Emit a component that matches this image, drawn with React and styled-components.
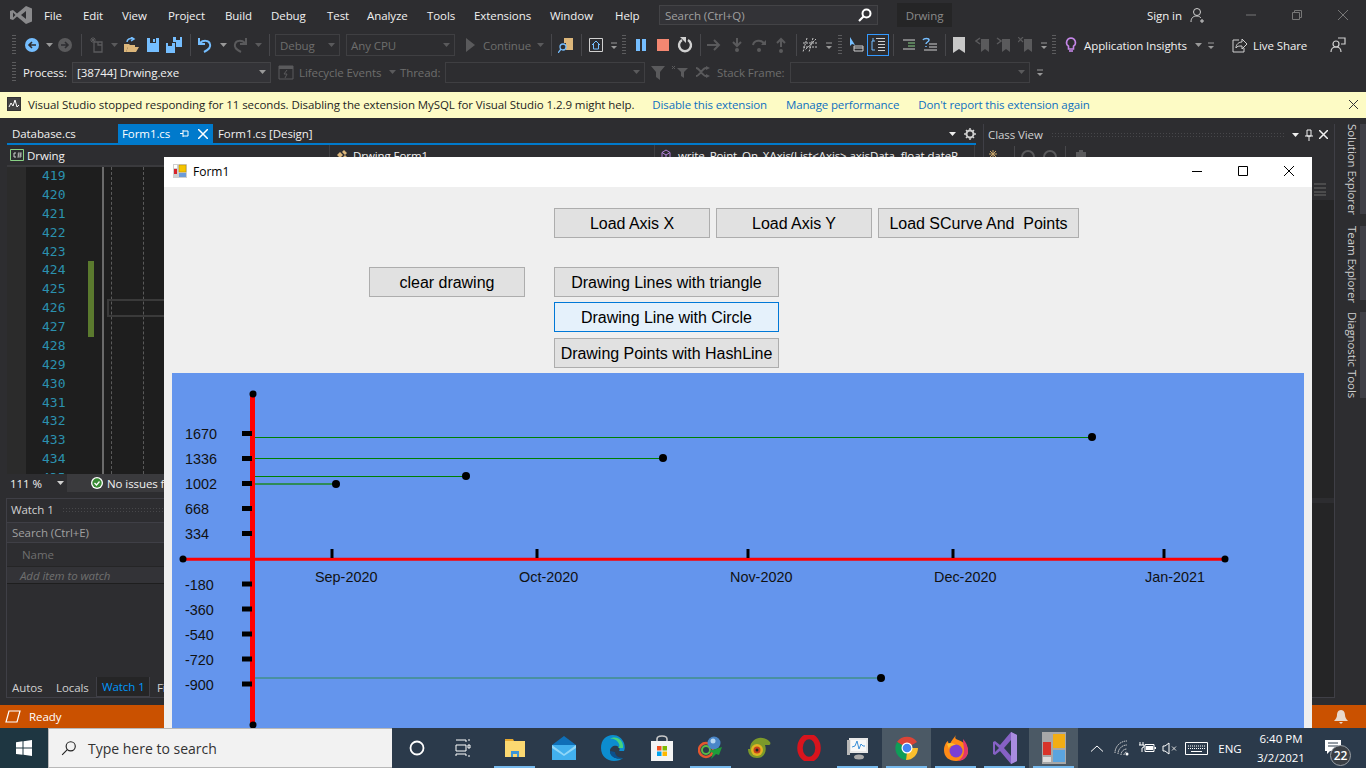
import React from 'react'
import styled, { createGlobalStyle } from 'styled-components'

const GlobalStyle = createGlobalStyle`
  html, body { margin: 0; padding: 0; background: #2d2d30; }
  * { box-sizing: border-box; }
`

const Desktop = styled.div`
  position: relative;
  width: 1366px;
  height: 768px;
  overflow: hidden;
  display: flex;
  flex-direction: column;
  background: #2d2d30;
  color: #f1f1f1;
  font-family: "Open Sans", "Liberation Sans", sans-serif;
  font-size: 11.5px;
  letter-spacing: -0.08px;
`

/* ---------- title bar ---------- */
const TitleBar = styled.div`
  height: 30px;
  display: flex;
  align-items: center;
  padding-left: 10px;
  flex: none;
`
const Logo = styled.div`
  width: 34px;
  display: flex;
  flex: none;
`
const MenuItem = styled.span`
  width: ${p => p.$w}px;
  flex: none;
`
const SearchBox = styled.div`
  width: 219px;
  height: 20px;
  display: flex;
  align-items: center;
  justify-content: space-between;
  padding: 0 5px;
  background: #333337;
  border: 1px solid #434346;
  color: #a0a0a0;
  flex: none;
`
const SolutionName = styled.div`
  width: 55px;
  height: 24px;
  margin-left: 19px;
  display: flex;
  align-items: center;
  justify-content: center;
  background: #252526;
  color: #8a8a8a;
  flex: none;
`
const SignIn = styled.span`
  margin-left: 195px;
  width: 43px;
  flex: none;
`
const WinControls = styled.div`
  margin-left: 22px;
  display: flex;
  width: 138px;
  flex: none;
`
const WinControl = styled.span`
  width: 46px;
  display: flex;
  justify-content: center;
  color: #777;
`

/* ---------- toolbars ---------- */
const ToolRow = styled.div`
  height: ${p => p.$h}px;
  display: flex;
  align-items: center;
  padding-left: 10px;
  flex: none;
`
const Slot = styled.span`
  width: ${p => p.$w || 16}px;
  margin-left: ${p => p.$ml || 0}px;
  height: 16px;
  display: flex;
  align-items: center;
  justify-content: center;
  flex: none;
`
const Sep = styled.span`
  width: 1px;
  height: 22px;
  margin-left: ${p => p.$ml}px;
  background: #47474b;
  flex: none;
`
const Grip = styled.span`
  width: 4px;
  height: 22px;
  margin-left: ${p => p.$ml}px;
  flex: none;
  background-image: radial-gradient(#5c5c5e 0.7px, transparent 0.8px);
  background-size: 2px 3px;
`
const Combo = styled.div`
  width: ${p => p.$w}px;
  height: ${p => p.$h || 22}px;
  margin-left: ${p => p.$ml}px;
  display: flex;
  align-items: center;
  justify-content: space-between;
  padding: 0 4px;
  border: 1px solid ${p => (p.$on ? '#434346' : '#3f3f42')};
  color: ${p => (p.$on ? '#f1f1f1' : '#6d6d6d')};
  background: ${p => (p.$on ? '#333337' : 'transparent')};
  flex: none;
`
const ToolText = styled.span`
  width: ${p => p.$w}px;
  margin-left: ${p => p.$ml}px;
  color: ${p => (p.$dim ? '#6d6d6d' : '#f1f1f1')};
  white-space: nowrap;
  flex: none;
`
const Toggled = styled.span`
  width: 22px;
  height: 22px;
  margin-left: ${p => p.$ml}px;
  border: 1px solid #3399ff;
  display: flex;
  align-items: center;
  justify-content: center;
  flex: none;
`

/* ---------- info bar ---------- */
const InfoBar = styled.div`
  height: 26px;
  margin-top: 8px;
  padding: 0 0 2px 7px;
  display: flex;
  align-items: center;
  background: #fdfbc5;
  color: #1e1e1e;
  flex: none;
`
const InfoIcon = styled.span`
  width: 14px;
  height: 14px;
  border: 1px solid #333;
  background: #444;
  margin-right: 7px;
  display: flex;
`
const InfoLink = styled.span`
  color: #0e70c0;
  margin-left: ${p => p.$ml}px;
  letter-spacing: -0.13px;
  white-space: nowrap;
`
const InfoClose = styled.span`
  margin-left: auto;
  margin-right: 8px;
  display: flex;
`

/* ---------- workspace ---------- */
const Workspace = styled.div`
  height: 587px;
  display: flex;
  flex: none;
`
const LeftColumn = styled.div`
  width: 976px;
  margin-left: 6px;
  display: flex;
  flex-direction: column;
  flex: none;
`
const TabStrip = styled.div`
  height: 21px;
  margin: 6px 6px 0 1px;
  display: flex;
  align-items: stretch;
  border-bottom: 2px solid #007acc;
  padding-left: 5px;
  flex: none;
`
const DocTab = styled.div`
  display: flex;
  align-items: center;
  width: ${p => p.$w}px;
  margin-left: ${p => p.$ml || 0}px;
  background: ${p => (p.$active ? '#007acc' : 'transparent')};
  padding-left: ${p => (p.$active ? 4 : 0)}px;
  color: ${p => (p.$active ? '#fff' : '#f1f1f1')};
  flex: none;
`
const TabPin = styled.span`
  margin-left: 10px;
  display: flex;
`
const TabClose = styled.span`
  margin-left: 9px;
  display: flex;
`
const TabTools = styled.div`
  margin-left: auto;
  display: flex;
  align-items: center;
  gap: 8px;
  width: 27px;
`
const NavBar = styled.div`
  height: 22px;
  display: flex;
  margin-left: 1px;
  margin-right: 6px;
  border-bottom: 2px solid #3a3a3d;
  background: #2d2d30;
  flex: none;
`
const NavCell = styled.div`
  width: ${p => p.$w}px;
  padding-left: ${p => p.$pl}px;
  display: flex;
  align-items: center;
  gap: ${p => p.$gap}px;
  border-right: 1px solid #3f3f42;
  white-space: nowrap;
  overflow: hidden;
  flex: none;
`
const Editor = styled.div`
  height: 307px;
  margin-left: 1px;
  display: flex;
  background: #1e1e1e;
  position: relative;
  flex: none;
`
const SelectionMargin = styled.div`
  width: 19px;
  background: #2b2b2b;
  flex: none;
`
const LineNumbers = styled.div`
  width: 62px;
  padding: 0 0 0 16px;
  height: 100%;
  overflow: hidden;
  color: #2b91af;
  font-family: "DejaVu Sans Mono", "Liberation Mono", monospace;
  font-size: 13px;
  line-height: 18.87px;
  letter-spacing: 0;
  flex: none;
`
const ChangeMargin = styled.div`
  width: 7px;
  padding-top: 94px;
  flex: none;
`
const ChangeBar = styled.div`
  width: 6px;
  height: 76px;
  background: #5b7a2e;
`
const Code = styled.div`
  flex: 1;
  margin-left: 7px;
  border-left: 2px solid #6a6a6a;
  position: relative;
`
const Guide = styled.span`
  position: absolute;
  top: 0;
  bottom: 0;
  left: ${p => p.$x}px;
  border-left: 1px dashed #5a5a5a;
`
const CurrentLine = styled.span`
  position: absolute;
  top: 132px;
  left: 3px;
  right: 0;
  height: 18px;
  border: 2px solid #3a3a3a;
`
const EditorFooter = styled.div`
  height: 18px;
  margin-left: 1px;
  display: flex;
  align-items: center;
  background: #3a3a3d;
  flex: none;
`
const ZoomCombo = styled.div`
  width: 60px;
  height: 18px;
  background: #2d2d30;
  display: flex;
  align-items: center;
  justify-content: space-between;
  padding: 0 3px;
  flex: none;
`
const IssueState = styled.div`
  width: 73px;
  margin-left: 24px;
  display: flex;
  align-items: center;
  gap: 4px;
  white-space: nowrap;
  overflow: hidden;
  flex: none;
  svg { flex: none; }
`
const WatchPanel = styled.div`
  height: 200px;
  margin-top: 6px;
  display: flex;
  flex-direction: column;
  border: 1px solid #3f3f46;
  flex: none;
`
const PanelTitle = styled.div`
  height: 23px;
  padding: 0 0 2px 4px;
  display: flex;
  align-items: center;
  gap: 8px;
  color: #d0d0d0;
  flex: none;
`
const TitleDots = styled.span`
  flex: 1;
  height: 6px;
  margin-left: ${p => p.$ml || 0}px;
  background-image: radial-gradient(#47474a 0.6px, transparent 0.7px);
  background-size: 3px 3px;
`
const WatchSearch = styled.div`
  height: 21px;
  display: flex;
  align-items: center;
  padding-left: 5px;
  background: #333337;
  border-top: 1px solid #3f3f46;
  border-bottom: 1px solid #3f3f46;
  color: #a0a0a0;
  flex: none;
`
const WatchRow = styled.div`
  height: ${p => p.$h}px;
  display: flex;
  align-items: center;
  padding-left: ${p => p.$pl}px;
  color: #6f6f6f;
  font-style: ${p => (p.$italic ? 'italic' : 'normal')};
  background: ${p => (p.$italic ? '#333337' : '#2d2d30')};
  border-bottom: 1px solid ${p => (p.$italic ? '#1e1e1e' : '#252526')};
  flex: none;
`
const WatchBody = styled.div`
  flex: 1;
  background: #2d2d30;
`
const BottomTabs = styled.div`
  height: 20px;
  display: flex;
  align-items: stretch;
  flex: none;
`
const BottomTab = styled.div`
  display: flex;
  align-items: center;
  width: ${p => p.$w}px;
  padding-left: ${p => p.$pl}px;
  color: ${p => (p.$active ? '#0097fb' : '#d0d0d0')};
  background: ${p => (p.$active ? '#252526' : 'transparent')};
  border: ${p => (p.$active ? '1px solid #3f3f46' : 'none')};
  border-top: none;
  flex: none;
`
const ClassPanel = styled.div`
  width: 352px;
  margin: 6px 0 7px 1px;
  border: 1px solid #3f3f46;
  border-top: none;
  display: flex;
  flex-direction: column;
  flex: none;
`
const ClassHead = styled.div`
  height: 21px;
  display: flex;
  align-items: center;
  padding: 0 6px 0 4px;
  gap: 6px;
  background: #2d2d30;
  color: #d0d0d0;
  flex: none;
`
const ClassTools = styled.div`
  height: 55px;
  background: #2d2d30;
  display: flex;
  flex-direction: column;
  flex: none;
`
const ClassToolRow = styled.div`
  height: 20px;
  padding-top: 3px;
  display: flex;
  align-items: center;
  flex: none;
`
const ClassSearchRow = styled.div`
  flex: 1;
  display: flex;
  justify-content: flex-end;
  align-items: center;
  padding: 12px 8px 0 0;
`
const ClassList = styled.div`
  height: 298px;
  background: #252526;
  flex: none;
`
const ClassBand = styled.div`
  height: 5px;
  background: #2d2d30;
  flex: none;
`
const ClassMembers = styled.div`
  flex: 1;
  background: #252526;
`
const SideGroup = styled.div`
  width: 31px;
  padding-top: 6px;
  display: flex;
  flex: none;
`
const SideLabels = styled.div`
  width: 25px;
  display: flex;
  flex-direction: column;
  flex: none;
`
const SideTab = styled.div`
  height: ${p => p.$h}px;
  margin-bottom: 12px;
  padding-left: 6px;
  writing-mode: vertical-rl;
  line-height: 16px;
  color: #d0d0d0;
  white-space: nowrap;
  flex: none;
`
const SideBars = styled.div`
  width: 6px;
  display: flex;
  flex-direction: column;
  flex: none;
`
const SideBar = styled.span`
  height: ${p => p.$h}px;
  margin-bottom: 12px;
  background: #3f3f46;
`

/* ---------- status bar ---------- */
const StatusBar = styled.div`
  height: 23px;
  display: flex;
  align-items: center;
  padding: 0 18px 0 5px;
  gap: 8px;
  background: #ca5100;
  color: #fff;
  flex: none;
`
const StatusBell = styled.span`
  margin-left: auto;
  display: flex;
`

/* ---------- taskbar ---------- */
const Taskbar = styled.div`
  height: 40px;
  display: flex;
  align-items: stretch;
  background: #2b3a4b;
  color: #fff;
  letter-spacing: 0;
  flex: none;
`
const StartButton = styled.div`
  width: 48px;
  display: flex;
  align-items: center;
  justify-content: center;
  background: #1e3641;
  flex: none;
`
const TaskSearch = styled.div`
  width: 344px;
  display: flex;
  align-items: center;
  gap: 11px;
  padding-left: 12px;
  background: #f2f2f2;
  border: 1px solid #b8b8b8;
  border-right: none;
  color: #333;
  font-size: 14px;
  flex: none;
`
const TaskIcons = styled.div`
  display: flex;
  flex: none;
`
const TaskBtn = styled.div`
  width: 49px;
  padding-right: ${p => p.$pr || 0}px;
  display: flex;
  align-items: center;
  justify-content: center;
  position: relative;
  background: ${p => (p.$hi ? '#4b5965' : 'transparent')};
  flex: none;
  &::after {
    content: '';
    display: ${p => (p.$on ? 'block' : 'none')};
    position: absolute;
    left: 4px;
    right: 4px;
    bottom: 0;
    height: 2px;
    background: #76b9ed;
  }
`
const Tray = styled.div`
  margin-left: 7px;
  display: flex;
  align-items: center;
  flex: none;
`
const TraySlot = styled.span`
  width: ${p => p.$w}px;
  display: flex;
  justify-content: center;
  flex: none;
`
const Clock = styled.div`
  width: 68px;
  display: flex;
  flex-direction: column;
  align-items: center;
  font-size: 11.5px;
  line-height: 19px;
  flex: none;
`
const Notify = styled.div`
  position: relative;
  margin-left: 10px;
  width: 20px;
  height: 20px;
  padding-top: 2px;
  flex: none;
`
const NotifyBadge = styled.span`
  position: absolute;
  left: 5px;
  top: 7px;
  width: 21px;
  height: 21px;
  border-radius: 50%;
  border: 1px solid #9aa0a6;
  background: #3a3f45;
  color: #fff;
  font-size: 12px;
  font-weight: 600;
  display: flex;
  align-items: center;
  justify-content: center;
`

/* ---------- Form1 window ---------- */
const FormWindow = styled.div`
  position: absolute;
  left: 164px;
  top: 157px;
  width: 1148px;
  height: 571px;
  overflow: hidden;
  display: flex;
  flex-direction: column;
  background: #efefef;
  color: #000;
  letter-spacing: 0;
`
const FormTitle = styled.div`
  height: 30px;
  display: flex;
  align-items: center;
  padding: 0 0 2px 9px;
  gap: 6px;
  background: #fff;
  font-size: 12px;
  flex: none;
`
const FormControls = styled.div`
  margin-left: auto;
  display: flex;
`
const FormControl = styled.span`
  width: 46px;
  display: flex;
  justify-content: center;
`
const FormBody = styled.div`
  flex: 1;
  display: flex;
  flex-direction: column;
  padding: 21px 8px 0;
`
const LoadRow = styled.div`
  display: flex;
  gap: 6px;
  padding-left: 382px;
  flex: none;
`
const DrawRow = styled.div`
  display: flex;
  gap: 29px;
  margin-top: 29px;
  padding-left: 197px;
  flex: none;
`
const DrawStack = styled.div`
  display: flex;
  flex-direction: column;
  gap: 5px;
`
const FormButton = styled.div`
  width: ${p => p.$w}px;
  height: 30px;
  margin-top: ${p => p.$mt || 0}px;
  padding-top: 1px;
  display: flex;
  align-items: center;
  justify-content: center;
  background: ${p => (p.$focus ? '#e5f1fb' : '#e1e1e1')};
  border: 1px solid ${p => (p.$focus ? '#0078d7' : '#adadad')};
  font-family: "Liberation Sans", Arial, sans-serif;
  font-size: 16px;
  letter-spacing: -0.03px;
  white-space: pre;
  flex: none;
`
const ChartPanel = styled.div`
  height: 355px;
  margin-top: 5px;
  background: #6495ed;
  flex: none;
`
const ChartText = styled.text`
  font-family: "Liberation Sans", Arial, sans-serif;
  font-size: 14.4px;
  fill: #111;
`

/* ---------- icons ---------- */
const I = ({ w = 16, h = 16, children, vb }) => (
  <svg width={w} height={h} viewBox={vb || `0 0 ${w} ${h}`} fill="none">{children}</svg>
)
const blue = '#75beff'
const dim = '#5a5a5c'
const Drop = ({ c = '#999' }) => <I w={7} h={4}><path d="M0 0h7L3.5 4z" fill={c} /></I>
const Overflow = () => (
  <I w={8} h={10}><path d="M1 3h6" stroke="#999" /><path d="M1 6h6L4 9z" fill="#999" /></I>
)
const Back = ({ c = blue, off }) => (
  <I>
    <circle cx="8" cy="8" r="7" fill={c} />
    <path d={off ? 'M4 8h7M8 5l3 3-3 3' : 'M12 8H5M8 5L5 8l3 3'} stroke="#2d2d30" strokeWidth="1.6" />
  </I>
)
const NewItem = () => (
  <I>
    <path d="M5 5h8v10H5zM9 5v3h4" stroke={dim} strokeWidth="1.3" />
    <path d="M4 0v6M1 3h6M2 1l4 4M6 1L2 5" stroke={dim} />
  </I>
)
const OpenFolder = () => (
  <I>
    <path d="M1 7h5l1 1h5v2H5l-2 5H1z" fill="#dcb67a" />
    <path d="M5 10h11l-3 5H3z" fill="#dcb67a" />
    <path d="M4 5c0-3 3-4 6-3M8 0l3 2-3 2" stroke={blue} strokeWidth="1.5" />
  </I>
)
const Save = () => (
  <I><path d="M2 1h12v14H2z" fill={blue} /><path d="M5 1h6v5H5z" fill="#2d2d30" /><path d="M8 2h2v3H8z" fill={blue} /></I>
)
const SaveAll = () => (
  <I>
    <path d="M0 6h9v10H0z" fill={blue} /><path d="M2 6h4v3H2z" fill="#2d2d30" />
    <path d="M7 0h9v10h-6V5H7z" fill={blue} /><path d="M10 0h4v3h-4z" fill="#2d2d30" />
  </I>
)
const Undo = ({ c = blue, flip }) => (
  <I>
    <g transform={flip ? 'matrix(-1 0 0 1 16 0)' : undefined}>
      <path d="M2 1v6h6" stroke={c} strokeWidth="2" fill="none" />
      <path d="M3 6c3-3 9-3 10 1 1 3-2 6-6 8" stroke={c} strokeWidth="2" />
    </g>
  </I>
)
const Play = () => <I><path d="M4 1l9 7-9 7z" fill={dim} /></I>
const FindFile = () => (
  <I>
    <path d="M6 1h9v12H8V6H6z" fill="#dcb67a" />
    <circle cx="5" cy="10" r="3" stroke={blue} strokeWidth="1.3" />
    <path d="M3 12l-3 4" stroke={blue} strokeWidth="1.3" />
  </I>
)
const Home = () => (
  <I>
    <path d="M1.500 1.500h13v13h-13z" stroke="#d0d0d0" />
    <path d="M4 8l4-4 4 4M5.500 7v5h5V7" stroke={blue} />
  </I>
)
const Pause = () => <I><path d="M3 2h4v12H3zM9 2h4v12H9z" fill={blue} /></I>
const Stop = () => <I><path d="M2 2h12v12H2z" fill="#f48771" /></I>
const Restart = () => (
  <I>
    <path d="M5 3a6 6 0 1 0 6 0" stroke="#d0d0d0" strokeWidth="2.4" />
    <path d="M3 0h6v6z" fill="#d0d0d0" />
  </I>
)
const StepArrow = () => <I><path d="M1 8h12M8 3l5 5-5 5" stroke={dim} strokeWidth="2" /></I>
const StepInto = ({ up }) => (
  <I>
    <path d={up ? 'M8 10V2M4 6l4-4 4 4' : 'M8 1v7M4 5l4 4 4-4'} stroke={dim} strokeWidth="2" />
    <circle cx="8" cy={up ? 14 : 13} r="2" fill={dim} />
  </I>
)
const StepOver = () => (
  <I>
    <path d="M2 8c1-5 9-6 11-1" stroke={dim} strokeWidth="2" />
    <path d="M10 8h5V3z" fill={dim} />
    <circle cx="8" cy="13" r="2" fill={dim} />
  </I>
)
const Hash = () => (
  <I>
    <path d="M5 1L1 15M11 1L7 15M14 2L3 13M1 6h14M1 10h14" stroke="#c8c8c8" strokeDasharray="2 1" />
  </I>
)
const Cursor = () => (
  <I>
    <path d="M2 0v9l2-2 3 1z" fill={blue} />
    <path d="M6 9h9v5H6zM6 11h9" stroke="#d0d0d0" />
  </I>
)
const Tree = () => (
  <I>
    <path d="M6 1.500h9M8 4.500h7M8 7.500h7M8 10.500h7M8 13.500h7" stroke="#d0d0d0" />
    <path d="M5 4H2v9h3M3 1v3" stroke={blue} />
  </I>
)
const IndentGreen = () => (
  <I>
    <path d="M2 3h12M2 12h12" stroke="#d0d0d0" />
    <path d="M7 6h7M7 9h7" stroke="#89d185" />
  </I>
)
const IndentBlue = () => (
  <I>
    <path d="M7 7h8M7 10h8M2 13h13" stroke="#d0d0d0" />
    <path d="M1 3c1-2 6-2 6 0 0 2-3 2-3 4M4 9v1" stroke={blue} strokeWidth="1.5" />
  </I>
)
const Bookmark = ({ c = '#c8c8c8', mark }) => (
  <I>
    <path d={mark ? 'M6 2h8v13l-4-3-4 3z' : 'M2 0h12v16l-6-4-6 4z'} fill={c} />
    {mark === 'l' && <path d="M5 1L1 4l4 3" stroke={c} strokeWidth="1.5" />}
    {mark === 'r' && <path d="M1 1l4 3-4 3" stroke={c} strokeWidth="1.5" />}
    {mark === 'x' && <path d="M0 0l5 5M5 0L0 5" stroke={c} strokeWidth="1.2" />}
  </I>
)
const Bulb = () => (
  <I>
    <path d="M8 1a4.500 4.500 0 0 0-2.500 8.200V12h5V9.200A4.500 4.500 0 0 0 8 1z" stroke="#c586e8" strokeWidth="1.6" />
    <path d="M6 14h4" stroke="#c586e8" strokeWidth="1.6" />
  </I>
)
const Share = () => (
  <I>
    <path d="M7 3H1v12h11v-4" stroke="#d0d0d0" />
    <path d="M4 11c0-4 3-6 6-6V2l5 5-5 5V9c-3 0-5 0-6 2z" stroke="#d0d0d0" />
  </I>
)
const Feedback = () => (
  <I>
    <circle cx="6" cy="7" r="3" stroke="#d0d0d0" strokeWidth="1.2" />
    <path d="M1 15c0-3 2-5 5-5s5 2 5 5" stroke="#d0d0d0" strokeWidth="1.2" />
    <path d="M8 1h7v6h-4" stroke="#d0d0d0" strokeWidth="1.2" />
  </I>
)
const Lifecycle = () => (
  <I>
    <path d="M1 2h14v13H1z" stroke={dim} />
    <path d="M1 2h14v3H1z" fill={dim} />
    <path d="M9 6L6 10h3l-2 4" stroke={dim} />
  </I>
)
const Funnel = ({ small }) => (
  <I>
    <path d={small ? 'M5 4h11l-4 4v6l-3-2V8z' : 'M1 2h14l-5 6v8l-4-3V8z'} fill={dim} />
    {small && <path d="M0 2l3 3M3 2L0 5" stroke={dim} />}
  </I>
)
const CrossFlag = () => (
  <I>
    <path d="M1 4c4 0 6 8 10 8M1 12c4 0 6-8 10-8" stroke={dim} strokeWidth="2" />
    <path d="M11 2l4 2-4 2zM11 10l4 2-4 2z" fill={dim} />
  </I>
)
const Close = ({ s = 10, c = '#333', sw = 1 }) => (
  <I w={s} h={s}><path d={`M0 0L${s} ${s}M${s} 0L0 ${s}`} stroke={c} strokeWidth={sw} /></I>
)
const PinIcon = () => (
  <I w={9} h={9}><path d="M0 4.500h3M3 1v7M3 2h5v5H3" stroke="#fff" /></I>
)
const VSLogo = () => (
  <I w={22} h={18}>
    <path d="M0 5l3-1 4 3.500L16 0l6 2.500v13L16 18l-9-7.500L3 14l-3-1zM3 6.500v5L5.500 9zM11 9l5 4V5z" fill="#8a8a8c" fillRule="evenodd" />
  </I>
)
const Magnifier = ({ c = '#fff', s = 14 }) => (
  <svg width={s} height={s} viewBox="0 0 14 14" fill="none">
    <circle cx="8.500" cy="5.500" r="4" stroke={c} strokeWidth={c === '#fff' ? 2 : 1} />
    <path d="M5.500 8.500L1 13" stroke={c} strokeWidth={c === '#fff' ? 2.200 : 1} />
  </svg>
)
const UserPlus = () => (
  <I>
    <circle cx="7" cy="5" r="3.500" stroke="#d0d0d0" />
    <path d="M1 15c0-4 2-6 6-6 2 0 3 1 4 2M12 12v4M10 14h4" stroke="#d0d0d0" />
  </I>
)
const FormAppIcon = () => (
  <I w={14} h={14}>
    <path d="M0 0h14v14H0z" fill="#cfcfcf" />
    <path d="M1 1h3v3H1z" fill="#fff" />
    <path d="M6 1h7v7H6z" fill="#f5c400" stroke="#b08a00" strokeWidth=".5" />
    <path d="M1 5h3v5H1z" fill="#d8232a" />
    <path d="M6 9h7v4H6z" fill="#6c9bd8" />
  </I>
)
const CSharpBox = () => (
  <I w={14} h={12}>
    <path d="M.5.5h13v11H.5z" stroke="#89d185" />
    <path d="M6 4H4v4h2" stroke="#d0d0d0" />
    <path d="M9 3l-1 6M11 3l-1 6M7.500 5h4.500M7.500 7h4.500" stroke="#d0d0d0" strokeWidth=".7" />
  </I>
)
const ClassGlyph = () => (
  <I w={12} h={12}><path d="M1 6l3-3 3 3-3 3z" fill="#dcb67a" /><path d="M6 3l2-2 3 3-2 2zM7 8l2-2 2 2-2 2z" fill="#dcb67a" /></I>
)
const MethodGlyph = () => (
  <I w={10} h={12}><path d="M5 1l4 2.500v5L5 11 1 8.500v-5zM1 3.500L5 6l4-2.500M5 6v5" stroke="#b180d7" /></I>
)
const CheckOk = () => (
  <I w={12} h={12}>
    <circle cx="6" cy="6" r="6" fill="#fff" />
    <circle cx="6" cy="6" r="4.700" fill="#388a34" />
    <path d="M3.500 6l2 2 3-3.500" stroke="#fff" strokeWidth="1.300" />
  </I>
)
const Gear = () => (
  <I w={12} h={12}>
    <circle cx="6" cy="6" r="3.500" stroke="#d0d0d0" strokeWidth="2" />
    <path d="M6 0v12M0 6h12M2 2l8 8M10 2l-8 8" stroke="#d0d0d0" strokeWidth="1.500" strokeDasharray="2 8" />
  </I>
)
const PanelPin = () => (
  <I w={8} h={12}><path d="M2 1h4v6H2zM0 7h8M4 7v5" stroke="#f1f1f1" /></I>
)
const ClassStar = () => (
  <I><path d="M8 1v8M4 5h8M5 2l6 6M11 2L5 8" stroke="#c9a66b" /></I>
)
const NavDot = () => <I><circle cx="8" cy="8" r="6" stroke={dim} strokeWidth="2" /></I>
const ClassNew = () => <I><path d="M3 3h10v11H3zM6 1h4v2H6z" fill={dim} /></I>
const ListGlyph = () => (
  <I w={12} h={14}><path d="M0 2h12M0 6h12M0 10h12M0 13h12" stroke="#555" strokeWidth="1.500" /></I>
)
const ReadyIcon = () => (
  <I><path d="M4 2h11l-3 11H1z" stroke="#fff" strokeWidth="1.200" /></I>
)
const Bell = () => (
  <I w={14} h={14}><path d="M7 0c3 0 4 3 4 5s1 4 3 6H0c2-2 3-4 3-6s1-5 4-5zM5 12h4l-2 2z" fill="#e8d8cc" /></I>
)
const WinLogo = () => (
  <I>
    <path d="M0 2.200l6.500-.9v6.300H0zM7.500 1.200L16 0v7.600H7.500zM0 8.600h6.500v6.200L0 13.900zM7.500 8.600H16V16l-8.500-1.200z" fill="#fff" />
  </I>
)
const Cortana = () => <I><circle cx="8" cy="8" r="6.500" stroke="#fff" strokeWidth="1.800" /></I>
const TaskView = () => (
  <I w={16} h={18}>
    <path d="M1 6h10v6H1zM1 1h10v2M1 17v-2h10v2M13 1h2M13 6h2v3h-2zM13 17h2" stroke="#fff" />
  </I>
)
const Explorer = () => (
  <I w={22} h={22}>
    <path d="M1 2h8l1 2H1z" fill="#e6a82e" />
    <path d="M1 4h20v16H1z" fill="#fbd871" />
    <path d="M7 14h8v6H7z" fill="#3c96d8" />
    <path d="M9 17h4v3H9z" fill="#fbd871" />
  </I>
)
const Mail = () => (
  <I w={24} h={24}>
    <path d="M12 0l12 9H0z" fill="#0f6fb8" />
    <path d="M0 9h24v15H0z" fill="#42b0ee" />
    <path d="M0 9l12 9 12-9v3l-12 8-12-8z" fill="#8fd6f8" />
  </I>
)
const Edge = () => (
  <I w={24} h={26}>
    <path d="M12 0C5 0 0 5 0 13c0 8 6 13 13 13 4 0 7-1 9-3-6 2-13-1-13-7 0-4 4-6 7-5 3 1 3 4 2 5h5c1-2 1-5 0-8-2-5-6-8-11-8z" fill="#0c8dd0" />
    <path d="M22 13c1-8-7-13-13-9 4-1 8 2 9 5 1 2 0 3-1 4z" fill="#44d27f" />
    <path d="M9 16c0 6 7 9 13 7-5 0-8-3-8-6z" fill="#0a4f8c" />
  </I>
)
const Store = () => (
  <I w={24} h={26}>
    <path d="M7 7V4c0-4 10-4 10 0v3" stroke="#c8c8c8" strokeWidth="1.600" />
    <path d="M1 6h22v20H1z" fill="#f4f4f4" />
    <path d="M7 11h4.500v4.500H7z" fill="#f25022" />
    <path d="M12.500 11H17v4.500h-4.500z" fill="#7fba00" />
    <path d="M7 16.500h4.500V21H7z" fill="#00a4ef" />
    <path d="M12.500 16.500H17V21h-4.500z" fill="#ffb900" />
  </I>
)
const Idm = () => (
  <I w={26} h={24}>
    <circle cx="8" cy="14" r="7" fill="none" stroke="#e4572e" strokeWidth="2.500" />
    <circle cx="8" cy="14" r="4" fill="none" stroke="#58b947" strokeWidth="2" />
    <circle cx="16" cy="7" r="6.500" fill="#4a86c8" />
    <circle cx="15" cy="5" r="2.500" fill="#b7d7f2" />
    <path d="M24 11L11 15l4 2-2 6 5-5 3 1z" fill="#1f9d3a" />
  </I>
)
const Chameleon = () => (
  <I w={24} h={26}>
    <path d="M2 14C2 5 10 2 14 3c3 0 5 1 8 4 1 2 0 3-2 3l-3 0c2 5 0 13-8 13-5 0-9-3-9-9z" fill="#7c9a2a" />
    <circle cx="9" cy="15" r="6" fill="#e0b422" />
    <circle cx="9" cy="15" r="3.500" fill="#c8431c" />
    <circle cx="9" cy="15" r="1.500" fill="#222" />
  </I>
)
const Opera = () => (
  <I w={24} h={26}>
    <ellipse cx="12" cy="13" rx="9" ry="11.500" stroke="#d8141d" strokeWidth="5.500" />
  </I>
)
const PerfMon = () => (
  <I w={24} h={26}>
    <path d="M3 3h19v15H3z" fill="#e8e8e8" />
    <path d="M5 5h15v11H5z" fill="#f8f8f8" />
    <path d="M6 12l3-1 2-5 2 8 2-5 2 2h2" stroke="#3a8fd8" />
    <path d="M1 5h3v15H1z" fill="#b8b8b8" />
    <ellipse cx="13" cy="22" rx="5" ry="2.500" fill="#aaa" />
  </I>
)
const Chrome = () => (
  <I w={24} h={24}>
    <path d="M12 12L2 6a12 12 0 0 1 20 0z" fill="#db4437" />
    <path d="M12 12H23A12 12 0 0 1 11 24z" fill="#fbc02d" />
    <path d="M12 12L11 24A12 12 0 0 1 2 6z" fill="#0f9d58" />
    <circle cx="12" cy="12" r="5.500" fill="#fff" />
    <circle cx="12" cy="12" r="4.300" fill="#4285f4" />
  </I>
)
const Firefox = () => (
  <I w={24} h={26}>
    <path d="M12 4C16 6 24 8 24 16c0 6-5 10-12 10S0 22 0 15C0 11 2 7 4 6c0 2 1 3 2 3 1-3 3-5 6-9-1 2-1 3 0 4z" fill="#ff8a16" />
    <path d="M19 4c3 3 5 7 5 12 0 6-5 10-10 10 4-3 6-6 6-10 0-4-1-8-1-12z" fill="#e3366b" />
    <circle cx="12" cy="16" r="6.500" fill="#7b3fd6" />
    <path d="M3 9c3-2 6-1 9 1-4 0-7 1-7 4z" fill="#ffbd2e" />
  </I>
)
const VSPurple = () => (
  <I w={24} h={32} vb="0 0 24 32">
    <path d="M18 0l6 3v26l-6 3L7 19l-5 4-2-1V10l2-1 5 4zM18 8l-7 8 7 8zM2 12v8l4-4z" fill="#8661c5" fillRule="evenodd" />
    <path d="M18 0l6 3v26l-6 3z" fill="#a98ce0" />
  </I>
)
const FormTaskIcon = () => (
  <I w={24} h={32} vb="0 0 24 32">
    <path d="M0 0h24v32H0z" fill="#a8a8a8" />
    <path d="M11 2h12v14H11z" fill="#f2ad14" />
    <path d="M1 10h8v13H1z" fill="#d8342a" />
    <path d="M11 18h12v12H11z" fill="#5ba4de" />
    <path d="M1 25h8v5H1z" fill="#ddd" />
  </I>
)
const Chevron = () => <I w={12} h={7}><path d="M0 6.500L6 1l6 5.500" stroke="#fff" /></I>
const WifiOff = () => (
  <I>
    <path d="M1 13a12 12 0 0 1 12-12M4 14a9 9 0 0 1 9-9M7 15a6 6 0 0 1 6-6M10 15a3 3 0 0 1 3-3" stroke="#ddd" strokeDasharray="1.500 .7" />
    <circle cx="13" cy="14" r="1.500" fill="#fff" />
  </I>
)
const Battery = () => (
  <I w={17} h={12}>
    <path d="M6 2.500h9v7H6z" stroke="#fff" /><path d="M7 4h7v4H7z" fill="#fff" /><path d="M15.500 5h1.500v2h-1.500z" fill="#fff" />
    <path d="M1 0v3M4 0v3M0 3h5v2l-2 1v4" stroke="#fff" />
  </I>
)
const Mute = () => (
  <I w={15} h={13}><path d="M1 4h2l4-3v11l-4-3H1z" stroke="#fff" /><path d="M10 4.500l4 4M14 4.500l-4 4" stroke="#ddd" /></I>
)
const Keyboard = () => (
  <I w={23} h={13}>
    <path d="M.5.500h22v12H.5z" stroke="#fff" />
    <path d="M3 4h17M3 6.500h17" stroke="#fff" strokeDasharray="1 1" />
    <path d="M6 9.500h11" stroke="#fff" />
  </I>
)
const ActionCenter = () => (
  <I w={16} h={14}><path d="M0 0h16v11H5l-3 3v-3H0z" fill="#fff" /><path d="M3 3h10M3 6h10" stroke="#2b3a4b" /></I>
)
const lineNumbers = [419,420,421,422,423,424,425,426,427,428,429,430,431,432,433,434,435]

const yTicks = [
  { y: 433.5, label: '1670' }, { y: 458.5, label: '1336' }, { y: 483.5, label: '1002' },
  { y: 508.5, label: '668' }, { y: 533.5, label: '334' }, { y: 584, label: '-180' },
  { y: 609, label: '-360' }, { y: 634, label: '-540' }, { y: 659, label: '-720' }, { y: 684, label: '-900' },
]
const xTicks = [
  { x: 332, tx: 315, label: 'Sep-2020' }, { x: 537, tx: 519, label: 'Oct-2020' },
  { x: 748, tx: 730, label: 'Nov-2020' }, { x: 953, tx: 934, label: 'Dec-2020' },
  { x: 1164, tx: 1145, label: 'Jan-2021' },
]
const series = [
  { y: 437.5, x: 1092, color: '#008000', w: 1 },
  { y: 458.5, x: 663, color: '#008000', w: 1 },
  { y: 476.5, x: 466, color: '#008000', w: 1 },
  { y: 484, x: 336, color: '#2e8b57', w: 2 },
  { y: 678, x: 881, color: '#2e8b57', w: 1 },
]

function Chart() {
  return (
    <svg width="1132" height="355" viewBox="172 373 1132 355" style={{ display: 'block' }}>
      {series.map(s => (
        <g key={s.y}>
          <path d={`M253 ${s.y}H${s.x}`} stroke={s.color} strokeWidth={s.w} />
          <circle cx={s.x} cy={Math.floor(s.y)} r="4" fill="#000" />
        </g>
      ))}
      <path d="M183 559.200H1225" stroke="#f00" strokeWidth="3" />
      <path d="M252.500 394V725" stroke="#f00" strokeWidth="5" />
      {[[253, 394], [253, 725], [183, 559], [1225, 559]].map(([x, y]) => (
        <circle key={x + '-' + y} cx={x} cy={y} r="3.500" fill="#000" />
      ))}
      {yTicks.map(t => (
        <g key={t.label}>
          <path d={`M242 ${t.y}H252`} stroke="#000" strokeWidth="5" />
          <ChartText x="185" y={t.y + 5.500}>{t.label}</ChartText>
        </g>
      ))}
      {xTicks.map(t => (
        <g key={t.label}>
          <path d={`M${t.x} 549V558`} stroke="#000" strokeWidth="3" />
          <ChartText x={t.tx} y="582">{t.label}</ChartText>
        </g>
      ))}
    </svg>
  )
}

export default function App() {
  return (
    <Desktop>
      <GlobalStyle />
      <TitleBar>
        <Logo><VSLogo /></Logo>
        <MenuItem $w={39}>File</MenuItem>
        <MenuItem $w={39}>Edit</MenuItem>
        <MenuItem $w={46}>View</MenuItem>
        <MenuItem $w={57}>Project</MenuItem>
        <MenuItem $w={46}>Build</MenuItem>
        <MenuItem $w={56}>Debug</MenuItem>
        <MenuItem $w={40}>Test</MenuItem>
        <MenuItem $w={60}>Analyze</MenuItem>
        <MenuItem $w={47}>Tools</MenuItem>
        <MenuItem $w={76}>Extensions</MenuItem>
        <MenuItem $w={65}>Window</MenuItem>
        <MenuItem $w={44}>Help</MenuItem>
        <SearchBox>Search (Ctrl+Q)<Magnifier /></SearchBox>
        <SolutionName>Drwing</SolutionName>
        <SignIn>Sign in</SignIn>
        <UserPlus />
        <WinControls>
          <WinControl><I w={10} h={10}><path d="M0 5h10" stroke="#777" /></I></WinControl>
          <WinControl><I w={10} h={10}><path d="M.5 2.500h7v7h-7zM2.500 2.500v-2h7v7h-2" stroke="#777" /></I></WinControl>
          <WinControl><Close c="#777" /></WinControl>
        </WinControls>
      </TitleBar>

      <ToolRow $h={30}>
        <Grip $ml={2} />
        <Slot $ml={8}><Back /></Slot>
        <Slot $w={8} $ml={5}><Drop /></Slot>
        <Slot $ml={4}><Back c={dim} off /></Slot>
        <Sep $ml={8} />
        <Slot $ml={7}><NewItem /></Slot>
        <Slot $w={8} $ml={5}><Drop c={dim} /></Slot>
        <Slot $ml={5}><OpenFolder /></Slot>
        <Slot $ml={6}><Save /></Slot>
        <Slot $ml={5}><SaveAll /></Slot>
        <Sep $ml={8} />
        <Slot $ml={6}><Undo /></Slot>
        <Slot $w={8} $ml={6}><Drop /></Slot>
        <Slot $ml={5}><Undo c={dim} flip /></Slot>
        <Slot $w={8} $ml={6}><Drop c={dim} /></Slot>
        <Sep $ml={7} />
        <Combo $w={65} $ml={5}>Debug<Drop c={dim} /></Combo>
        <Combo $w={109} $ml={6}>Any CPU<Drop c={dim} /></Combo>
        <Slot $ml={7}><Play /></Slot>
        <ToolText $w={49} $ml={5} $dim>Continue</ToolText>
        <Slot $w={8} $ml={4}><Drop c={dim} /></Slot>
        <Sep $ml={7} />
        <Slot $ml={6}><FindFile /></Slot>
        <Sep $ml={7} />
        <Slot $ml={6}><Home /></Slot>
        <Slot $w={8} $ml={6}><Overflow /></Slot>
        <Grip $ml={4} />
        <Slot $ml={7}><Pause /></Slot>
        <Slot $ml={6}><Stop /></Slot>
        <Slot $ml={6}><Restart /></Slot>
        <Sep $ml={7} />
        <Slot $ml={5}><StepArrow /></Slot>
        <Slot $ml={7}><StepInto /></Slot>
        <Slot $ml={6}><StepOver /></Slot>
        <Slot $ml={6}><StepInto up /></Slot>
        <Sep $ml={7} />
        <Slot $ml={5}><Hash /></Slot>
        <Slot $w={8} $ml={7}><Overflow /></Slot>
        <Grip $ml={5} />
        <Slot $ml={6}><Cursor /></Slot>
        <Toggled $ml={3}><Tree /></Toggled>
        <Sep $ml={4} />
        <Slot $ml={7}><IndentGreen /></Slot>
        <Slot $ml={5}><IndentBlue /></Slot>
        <Sep $ml={7} />
        <Slot $ml={5}><Bookmark /></Slot>
        <Slot $ml={8}><Bookmark c={dim} mark="l" /></Slot>
        <Slot $ml={5}><Bookmark c={dim} mark="r" /></Slot>
        <Slot $ml={6}><Bookmark c={dim} mark="x" /></Slot>
        <Slot $w={8} $ml={6}><Overflow /></Slot>
        <Grip $ml={4} />
        <Slot $ml={7}><Bulb /></Slot>
        <ToolText $w={105} $ml={5}>Application Insights</ToolText>
        <Slot $w={8} $ml={5}><Drop /></Slot>
        <Slot $w={8} $ml={5}><Overflow /></Slot>
        <Slot $ml={17}><Share /></Slot>
        <ToolText $w={53} $ml={5}>Live Share</ToolText>
        <Slot $ml={24}><Feedback /></Slot>
      </ToolRow>

      <ToolRow $h={24}>
        <Grip $ml={2} />
        <ToolText $w={44} $ml={7}>Process:</ToolText>
        <Combo $w={199} $h={21} $ml={5} $on>[38744] Drwing.exe<Drop /></Combo>
        <Slot $ml={7}><Lifecycle /></Slot>
        <ToolText $w={84} $ml={5} $dim>Lifecycle Events</ToolText>
        <Slot $w={8} $ml={5}><Drop c={dim} /></Slot>
        <ToolText $w={39} $ml={4} $dim>Thread:</ToolText>
        <Combo $w={200} $h={21} $ml={6}><span /><Drop c={dim} /></Combo>
        <Slot $ml={5}><Funnel /></Slot>
        <Slot $ml={6}><Funnel small /></Slot>
        <Slot $ml={7}><CrossFlag /></Slot>
        <ToolText $w={67} $ml={6} $dim>Stack Frame:</ToolText>
        <Combo $w={240} $h={21} $ml={6}><span /><Drop c={dim} /></Combo>
        <Slot $w={8} $ml={6}><Overflow /></Slot>
      </ToolRow>

      <InfoBar>
        <InfoIcon>
          <I w={12} h={12}><path d="M1 9l2-4 2 3 2-6 2 7 2-2" stroke="#fff" /></I>
        </InfoIcon>
        Visual Studio stopped responding for 11 seconds. Disabling the extension MySQL for Visual Studio 1.2.9 might help.
        <InfoLink $ml={18}>Disable this extension</InfoLink>
        <InfoLink $ml={19}>Manage performance</InfoLink>
        <InfoLink $ml={19}>Don't report this extension again</InfoLink>
        <InfoClose><Close s={9} /></InfoClose>
      </InfoBar>

      <Workspace>
        <LeftColumn>
          <TabStrip>
            <DocTab $w={106}>Database.cs</DocTab>
            <DocTab $w={95} $active>Form1.cs<TabPin><PinIcon /></TabPin><TabClose><Close c="#fff" sw={1.5} /></TabClose></DocTab>
            <DocTab $w={300} $ml={5}>Form1.cs [Design]</DocTab>
            <TabTools><Drop c="#eee" /><Gear /></TabTools>
          </TabStrip>
          <NavBar>
            <NavCell $w={323} $pl={3} $gap={3}><CSharpBox />Drwing</NavCell>
            <NavCell $w={325} $pl={6} $gap={5}><ClassGlyph />Drwing.Form1</NavCell>
            <NavCell $w={320} $pl={6} $gap={7}><MethodGlyph />write_Point_On_XAxis(List&lt;Axis&gt; axisData, float dateP</NavCell>
          </NavBar>
          <Editor>
            <SelectionMargin />
            <LineNumbers>
              {lineNumbers.map(n => <div key={n}>{n}</div>)}
            </LineNumbers>
            <ChangeMargin><ChangeBar /></ChangeMargin>
            <Code>
              <Guide $x={7} />
              <Guide $x={39} />
              <CurrentLine />
            </Code>
          </Editor>
          <EditorFooter>
            <ZoomCombo>111 %<Drop c="#d0d0d0" /></ZoomCombo>
            <IssueState><CheckOk />No issues found</IssueState>
          </EditorFooter>
          <WatchPanel>
            <PanelTitle>Watch 1<TitleDots /></PanelTitle>
            <WatchSearch>Search (Ctrl+E)</WatchSearch>
            <WatchRow $h={24} $pl={15}>Name</WatchRow>
            <WatchRow $h={17} $pl={13} $italic>Add item to watch</WatchRow>
            <WatchBody />
            <BottomTabs>
              <BottomTab $w={49} $pl={5}>Autos</BottomTab>
              <BottomTab $w={40} $pl={0}>Locals</BottomTab>
              <BottomTab $w={54} $pl={5} $active>Watch 1</BottomTab>
              <BottomTab $w={16} $pl={7}>Fi</BottomTab>
            </BottomTabs>
          </WatchPanel>
        </LeftColumn>
        <ClassPanel>
          <ClassHead>
            Class View<TitleDots $ml={2} /><Drop c="#eee" /><PanelPin /><Close s={9} c="#f1f1f1" sw={1.500} />
          </ClassHead>
          <ClassTools>
            <ClassToolRow>
              <Slot $ml={1}><ClassStar /></Slot>
              <Sep $ml={13} />
              <Slot $ml={5}><NavDot /></Slot>
              <Slot $ml={6}><NavDot /></Slot>
              <Sep $ml={7} />
              <Slot $ml={7}><ClassNew /></Slot>
            </ClassToolRow>
            <ClassSearchRow><ListGlyph /></ClassSearchRow>
          </ClassTools>
          <ClassList />
          <ClassBand />
          <ClassMembers />
        </ClassPanel>
        <SideGroup>
          <SideLabels>
            <SideTab $h={90}>Solution Explorer</SideTab>
            <SideTab $h={74}>Team Explorer</SideTab>
            <SideTab $h={86}>Diagnostic Tools</SideTab>
          </SideLabels>
          <SideBars>
            <SideBar $h={90} />
            <SideBar $h={74} />
            <SideBar $h={86} />
          </SideBars>
        </SideGroup>
      </Workspace>

      <StatusBar>
        <ReadyIcon />
        <span>Ready</span>
        <StatusBell><Bell /></StatusBell>
      </StatusBar>

      <Taskbar>
        <StartButton><WinLogo /></StartButton>
        <TaskSearch><Magnifier c="#222" s={16} />Type here to search</TaskSearch>
        <TaskIcons>
          <TaskBtn><Cortana /></TaskBtn>
          <TaskBtn $pr={5}><TaskView /></TaskBtn>
          <TaskBtn $on><Explorer /></TaskBtn>
          <TaskBtn><Mail /></TaskBtn>
          <TaskBtn><Edge /></TaskBtn>
          <TaskBtn><Store /></TaskBtn>
          <TaskBtn $on><Idm /></TaskBtn>
          <TaskBtn><Chameleon /></TaskBtn>
          <TaskBtn><Opera /></TaskBtn>
          <TaskBtn $on><PerfMon /></TaskBtn>
          <TaskBtn $on $hi><Chrome /></TaskBtn>
          <TaskBtn $on><Firefox /></TaskBtn>
          <TaskBtn $on><VSPurple /></TaskBtn>
          <TaskBtn $on $hi><FormTaskIcon /></TaskBtn>
        </TaskIcons>
        <Tray>
          <TraySlot $w={24}><Chevron /></TraySlot>
          <TraySlot $w={26}><WifiOff /></TraySlot>
          <TraySlot $w={24}><Battery /></TraySlot>
          <TraySlot $w={20}><Mute /></TraySlot>
          <TraySlot $w={34}><Keyboard /></TraySlot>
          <TraySlot $w={34}>ENG</TraySlot>
          <Clock><span>6:40 PM</span><span>3/2/2021</span></Clock>
          <Notify><ActionCenter /><NotifyBadge>22</NotifyBadge></Notify>
        </Tray>
      </Taskbar>

      <FormWindow>
        <FormTitle>
          <FormAppIcon />Form1
          <FormControls>
            <FormControl><I w={10} h={10}><path d="M0 5.500h10" stroke="#000" /></I></FormControl>
            <FormControl><I w={10} h={10}><path d="M.5.500h9v9h-9z" stroke="#000" /></I></FormControl>
            <FormControl><Close s={10} c="#000" /></FormControl>
          </FormControls>
        </FormTitle>
        <FormBody>
          <LoadRow>
            <FormButton $w={156}>Load Axis X</FormButton>
            <FormButton $w={156}>Load Axis Y</FormButton>
            <FormButton $w={201}>Load SCurve And  Points</FormButton>
          </LoadRow>
          <DrawRow>
            <FormButton $w={156}>clear drawing</FormButton>
            <DrawStack>
              <FormButton $w={225}>Drawing Lines with triangle</FormButton>
              <FormButton $w={225} $focus>Drawing Line with Circle</FormButton>
              <FormButton $w={225} $mt={1}>Drawing Points with HashLine</FormButton>
            </DrawStack>
          </DrawRow>
          <ChartPanel><Chart /></ChartPanel>
        </FormBody>
      </FormWindow>
    </Desktop>
  )
}
